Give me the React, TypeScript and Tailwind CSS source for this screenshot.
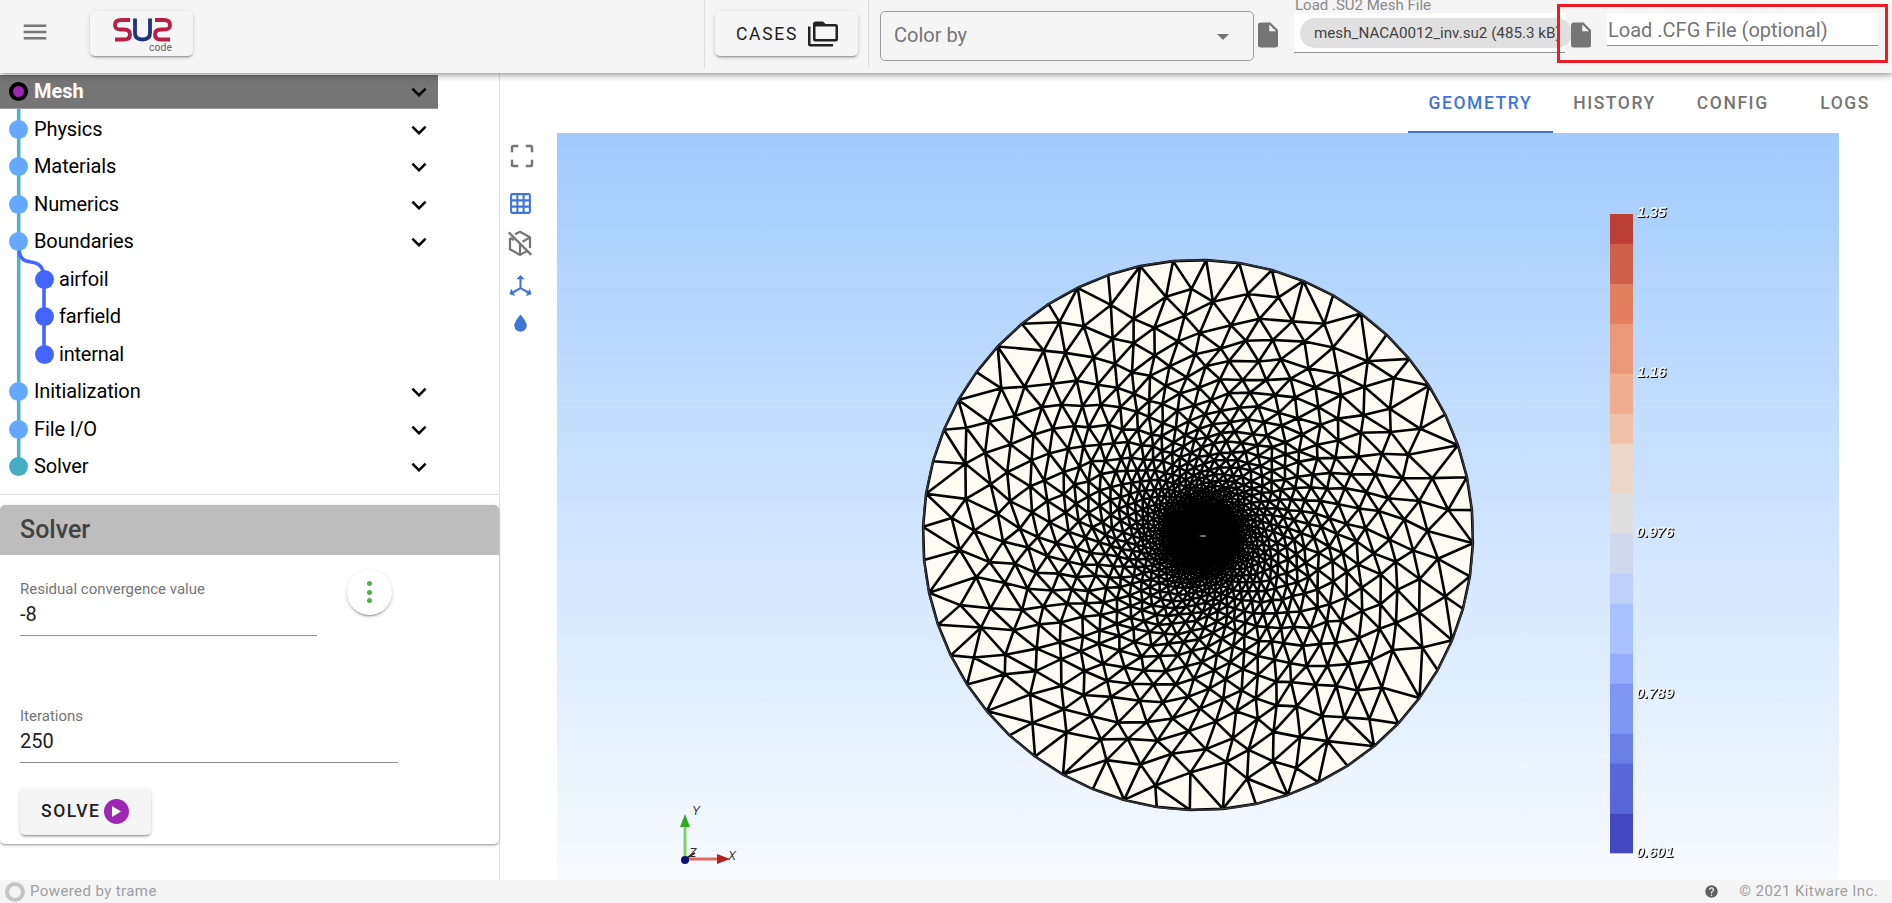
import { useMemo } from "react";

const P = {
  menu: "M3,6H21V8H3V6M3,11H21V13H3V11M3,16H21V18H3V16Z",
  file: "M13,9V3.5L18.5,9M6,2C4.89,2 4,2.89 4,4V20A2,2 0 0,0 6,22H18A2,2 0 0,0 20,20V8L14,2H6Z",
  chevron: "M7.41,8.58L12,13.17L16.59,8.58L18,10L12,16L6,10L7.41,8.58Z",
  folders: "M22,4H14L12,2H6A2,2 0 0,0 4,4V16A2,2 0 0,0 6,18H22A2,2 0 0,0 24,16V6A2,2 0 0,0 22,4M22,16H6V6H22V16M2,6H0V20A2,2 0 0,0 2,22H20V20H2V6Z",
  crop: "M5,3C3.89,3 3,3.89 3,5V9H5V5H9V3H5M19,3H15V5H19V9H21V5C21,3.89 20.1,3 19,3M5,15H3V19A2,2 0 0,0 5,21H9V19H5V15M19,15V19H15V21H19A2,2 0 0,0 21,19V15H19Z",
  grid: "M10,4V8H14V4H10M16,4V8H20V4H16M16,10V14H20V10H16M16,16V20H20V16H16M14,20V16H10V20H14M8,20V16H4V20H8M8,14V10H4V14H8M8,8V4H4V8H8M10,14H14V10H10V14M4,2H20A2,2 0 0,1 22,4V20A2,2 0 0,1 20,22H4C2.92,22 2,21.1 2,20V4A2,2 0 0,1 4,2Z",
  axis: "M12,2L16,6H13V13.85L19.53,17.61L21,15.03L22.5,20.5L17.03,21.96L18.53,19.35L12,15.58L5.47,19.35L6.97,21.96L1.5,20.5L3,15.03L4.47,17.61L11,13.85V6H8L12,2Z",
  water: "M12,20A6,6 0 0,1 6,14C6,10 12,3.25 12,3.25C12,3.25 18,10 18,14A6,6 0 0,1 12,20Z",
  help: "M15.07,11.25L14.17,12.17C13.45,12.89 13,13.5 13,15H11V14.5C11,13.39 11.45,12.39 12.17,11.67L13.41,10.41C13.78,10.05 14,9.55 14,9C14,7.89 13.1,7 12,7A2,2 0 0,0 10,9H8A4,4 0 0,1 12,5A4,4 0 0,1 16,9C16,9.88 15.64,10.67 15.07,11.25M13,19H11V17H13M12,2A10,10 0 0,0 2,12A10,10 0 0,0 12,22A10,10 0 0,0 22,12C22,6.47 17.5,2 12,2Z",
};

function Icon({ d, className }: { d: string; className: string }) {
  return (
    <svg viewBox="0 0 24 24" className={className} fill="currentColor">
      <path d={d} fillRule="evenodd" />
    </svg>
  );
}

function buildMesh(): string {
  const cx = 1198, cy = 535, R = 275, fx = 1203, fy = 536;
  let seed = 12345;
  const rnd = () => {
    seed = (seed * 16807) % 2147483647;
    return seed / 2147483647 - 0.5;
  };
  const pts: [number, number][] = [];
  const N = 1500, rMin = 9, rMax = 256;
  const c = Math.log(rMax / rMin) / N;
  for (let k = 0; k < N; k++) {
    const r = rMin * Math.exp(c * k);
    const t = k * 2.399963;
    const j = r * 0.03;
    const mix = r / R;
    const ox = fx + (cx - fx) * mix, oy = fy + (cy - fy) * mix;
    pts.push([ox + r * Math.cos(t) + rnd() * j, oy + r * Math.sin(t) + rnd() * j]);
  }
  const B = 52;
  for (let i = 0; i < B; i++) {
    const t = (i / B) * Math.PI * 2 + 0.03;
    pts.push([cx + R * Math.cos(t), cy + R * Math.sin(t)]);
  }
  const n = pts.length;
  pts.push([cx - 20000, cy - 20000], [cx + 20000, cy - 20000], [cx, cy + 20000]);
  type T = { a: number; b: number; c: number; x: number; y: number; r: number };
  const make = (a: number, b: number, c2: number): T => {
    const [ax, ay] = pts[a], [bx, by] = pts[b], [ex, ey] = pts[c2];
    const d = 2 * (ax * (by - ey) + bx * (ey - ay) + ex * (ay - by));
    const A = ax * ax + ay * ay, E = bx * bx + by * by, F = ex * ex + ey * ey;
    const x = (A * (by - ey) + E * (ey - ay) + F * (ay - by)) / d;
    const y = (A * (ex - bx) + E * (ax - ex) + F * (bx - ax)) / d;
    return { a, b, c: c2, x, y, r: (x - ax) ** 2 + (y - ay) ** 2 };
  };
  let tris: T[] = [make(n, n + 1, n + 2)];
  for (let i = 0; i < n; i++) {
    const [px, py] = pts[i];
    const keep: T[] = [];
    const edges = new Map<string, [number, number, number]>();
    const add = (u: number, v: number) => {
      const key = u < v ? u + "," + v : v + "," + u;
      const e = edges.get(key);
      if (e) e[2]++;
      else edges.set(key, [u, v, 1]);
    };
    for (const t of tris) {
      if ((px - t.x) ** 2 + (py - t.y) ** 2 < t.r) {
        add(t.a, t.b);
        add(t.b, t.c);
        add(t.c, t.a);
      } else keep.push(t);
    }
    edges.forEach((e) => {
      if (e[2] === 1) keep.push(make(e[0], e[1], i));
    });
    tris = keep;
  }
  const seen = new Set<string>();
  let path = "";
  const line = (u: number, v: number) => {
    if (u >= n || v >= n) return;
    const key = u < v ? u + "," + v : v + "," + u;
    if (seen.has(key)) return;
    seen.add(key);
    path += `M${pts[u][0].toFixed(1)} ${pts[u][1].toFixed(1)}L${pts[v][0].toFixed(1)} ${pts[v][1].toFixed(1)}`;
  };
  for (const t of tris) {
    line(t.a, t.b);
    line(t.b, t.c);
    line(t.c, t.a);
  }
  return path;
}

const bands: [number, string][] = [
  [67, "#bb4033"], [90, "#cf6048"], [89, "#e17f5e"], [112, "#ea9877"], [90, "#f0ae8e"], [67, "#f0c2a9"],
  [112, "#ecd6c8"], [89, "#dfdfdf"], [90, "#cfd8ec"], [67, "#bfd0f8"], [112, "#a9c1fd"], [68, "#94aefd"],
  [111, "#7f97f4"], [68, "#6a80e6"], [111, "#5868d8"], [89, "#4348c0"],
];

function Viewer() {
  const mesh = useMemo(buildMesh, []);
  let y = 214;
  const rects = bands.map(([h, col]) => {
    const hh = (h * 639) / 1432;
    const el = <rect key={col} x={1610} y={y} width={23} height={hh + 0.3} fill={col} />;
    y += hh;
    return el;
  });
  return (
    <div className="relative w-[1282px] h-[747px] bg-gradient-to-b from-[#a2cbfd] to-[#f8fbff]">
      <svg viewBox="557 133 1282 747" className="absolute inset-0 w-full h-full">
        <circle cx={1198} cy={535} r={275} fill="#fdfbf2" />
        <circle cx={1203} cy={536} r={32} fill="#000" />
        <path d={mesh} stroke="#000" strokeWidth={2.6} fill="none" />
        <ellipse cx={1203} cy={536} rx={3.5} ry={1} fill="#777" />
        <circle cx={1198} cy={535} r={275} fill="none" stroke="#33363c" strokeWidth={1.6} />
        {rects}
        <g fill="#f4f4f4" fontFamily="'Liberation Sans', sans-serif" fontStyle="italic" fontWeight={700} fontSize={15} className="[filter:drop-shadow(1px_1px_0.5px_#111)]">
          <text x={1637} y={217}>1.35</text>
          <text x={1637} y={377}>1.16</text>
          <text x={1636} y={537}>0.976</text>
          <text x={1636} y={698}>0.789</text>
          <text x={1636} y={857}>0.601</text>
        </g>
        <line x1={685} y1={859} x2={685} y2={826} stroke="#7ed36e" strokeWidth={3} />
        <path d="M685 814l5 13h-10z" fill="#35a81e" />
        <line x1={685} y1={859} x2={722} y2={859} stroke="#e26a62" strokeWidth={3} />
        <path d="M730 859l-13 5v-10z" fill="#b5201c" />
        <line x1={685} y1={859} x2={695} y2={853} stroke="#222" strokeWidth={1.5} />
        <circle cx={685} cy={860} r={4} fill="#10106e" />
        <g fill="#333" fontFamily="'Liberation Sans', sans-serif" fontStyle="italic" fontSize={12}>
          <text x={692} y={815}>Y</text>
          <text x={728} y={860}>X</text>
          <text x={689} y={857}>Z</text>
        </g>
      </svg>
    </div>
  );
}

function Dot({ color }: { color: string }) {
  return <span className={`w-[19px] h-[19px] rounded-full shrink-0 ${color}`} />;
}

function TreeRow({ label, color, chevron = true }: { label: string; color: string; chevron?: boolean }) {
  return (
    <div className="relative h-[37.5px] flex items-center pl-[9px] text-[20px] tracking-[-0.1px] text-black">
      <Dot color={color} />
      <span className="ml-[6px] leading-none -mt-[1px]">{label}</span>
      {chevron && <Icon d={P.chevron} className="absolute left-[404px] top-[4px] w-[30px] h-[30px] text-black" />}
    </div>
  );
}

function SubRow({ label }: { label: string }) {
  return (
    <div className="relative h-[37.5px] flex items-center pl-[34.5px] text-[20px] tracking-[-0.2px] text-black">
      <Dot color="bg-[#4464ff]" />
      <span className="ml-[5.5px] leading-none -mt-[1px]">{label}</span>
    </div>
  );
}

function Tree() {
  return (
    <div className="relative">
      <svg className="absolute left-0 top-0 w-[60px] h-[412px]" viewBox="0 0 60 412" fill="none">
        <path d="M18.7 27V393" stroke="#4fb2c9" strokeWidth={3.6} />
        <path d="M19 177c1 10 6 11 12 12c8 1 13 5 13 16V281" stroke="#4464ff" strokeWidth={3.6} />
      </svg>
      <div className="relative h-[37.5px] flex items-center pl-[9px]">
        <div className="absolute left-0 top-[2px] w-[438px] h-[34px] bg-[#757575] border-b border-[#9a9a9a]" />
        <span className="relative w-[19px] h-[19px] rounded-full bg-[#9c27b0] border-[4px] border-black shrink-0" />
        <span className="relative ml-[6px] text-[20px] font-bold text-white leading-none -mt-[1px]">Mesh</span>
        <Icon d={P.chevron} className="absolute left-[404px] top-[4px] w-[30px] h-[30px] text-black" />
      </div>
      <TreeRow label="Physics" color="bg-[#64a9ff]" />
      <TreeRow label="Materials" color="bg-[#64a9ff]" />
      <TreeRow label="Numerics" color="bg-[#64a9ff]" />
      <TreeRow label="Boundaries" color="bg-[#64a9ff]" />
      <SubRow label="airfoil" />
      <SubRow label="farfield" />
      <SubRow label="internal" />
      <TreeRow label="Initialization" color="bg-[#64a9ff]" />
      <TreeRow label="File I/O" color="bg-[#64a9ff]" />
      <TreeRow label="Solver" color="bg-[#45adc4]" />
    </div>
  );
}

function Field({ label, value, width, gap }: { label: string; value: string; width: string; gap: string }) {
  return (
    <div className={`${width} ${gap} border-b border-[#8f8f8f]`}>
      <div className="text-[15px] leading-[18px] text-[#757575]">{label}</div>
      <div className="mt-[1px] text-[20px] leading-[30px] text-[#212121] pb-[6px]">{value}</div>
    </div>
  );
}

function SolverPanel() {
  return (
    <div className="relative mt-[10px] h-[339px] bg-white rounded-[5px] shadow-[0_2px_2px_-1px_rgba(0,0,0,0.3),0_1px_4px_rgba(0,0,0,0.18)]">
      <div className="h-[50px] bg-[#bdbdbd] rounded-t-[5px] flex items-center pl-[20px] text-[25px] font-medium text-[#424242] leading-none">Solver</div>
      <div className="px-[20px] pt-[25px]">
        <Field label="Residual convergence value" value="-8" width="w-[297px]" gap="mb-[71px]" />
        <Field label="Iterations" value="250" width="w-[378px]" gap="mb-[26px]" />
        <button className="w-[131px] h-[46px] bg-[#f5f5f5] rounded-[5px] shadow-[0_3px_1px_-2px_rgba(0,0,0,0.2),0_2px_2px_rgba(0,0,0,0.14),0_1px_5px_rgba(0,0,0,0.12)] flex items-center pl-[21px] text-[17.5px] font-medium tracking-[1.56px] text-[#212121]">
          SOLVE
          <span className="ml-[3px] w-[25px] h-[25px] rounded-full bg-[#9c27b0] flex items-center justify-center">
            <svg viewBox="0 0 10 12" className="w-[9px] h-[11px] ml-[1px]"><path d="M0 0l10 6-10 6z" fill="#fff" /></svg>
          </span>
        </button>
      </div>
      <div className="absolute left-[347px] top-[65px] w-[45px] h-[45px] rounded-full bg-white shadow-[0_3px_1px_-2px_rgba(0,0,0,0.2),0_2px_2px_rgba(0,0,0,0.14),0_1px_5px_rgba(0,0,0,0.12)] flex flex-col items-center justify-center gap-[3.5px]">
        <span className="w-[5px] h-[5px] rounded-full bg-[#4caf50]" />
        <span className="w-[5px] h-[5px] rounded-full bg-[#4caf50]" />
        <span className="w-[5px] h-[5px] rounded-full bg-[#4caf50]" />
      </div>
    </div>
  );
}

function Logo() {
  return (
    <div className="relative ml-[44px] mt-[11px] w-[103px] h-[45px] bg-[#f5f5f5] rounded-[5px] shadow-[0_3px_1px_-2px_rgba(0,0,0,0.2),0_2px_2px_rgba(0,0,0,0.14),0_1px_5px_rgba(0,0,0,0.12)]">
      <svg viewBox="0 0 103 45" className="absolute inset-0 w-full h-full" fill="none" strokeWidth={3.8}>
        <path d="M40 9H31c-4 0-6 1.500-6 5s2 4.500 6 4.500h3c4 0 6 2 6 5s-2 5-6 5H25" stroke="#b81f45" />
        <path d="M45 7.500V22c0 4.500 2.500 6.500 7.500 6.500s7.500-2 7.500-6.500V7.500" stroke="#1f3480" />
        <path d="M65 9h9c4 0 6 1.500 6 5s-2 4.500-6 4.500h-3c-4 0-6 2-6 5s2 5 6 5h9" stroke="#b81f45" />
      </svg>
      <span className="absolute left-[59px] top-[31px] text-[10.5px] leading-[12px] text-[#666]">code</span>
    </div>
  );
}

function Header() {
  return (
    <header className="relative z-10 h-[73px] shrink-0 flex items-start bg-[#f5f5f5] shadow-[0_2px_4px_-1px_rgba(0,0,0,0.2),0_4px_5px_rgba(0,0,0,0.14),0_1px_10px_rgba(0,0,0,0.12)]">
      <Icon d={P.menu} className="ml-[20px] mt-[17px] w-[30px] h-[30px] text-[#757575]" />
      <div className="-ml-[4px]"><Logo /></div>
      <div className="ml-[511px] w-px h-[68px] bg-[#dcdcdc]" />
      <button className="ml-[10px] mt-[11px] w-[143px] h-[45px] bg-[#f5f5f5] rounded-[5px] shadow-[0_3px_1px_-2px_rgba(0,0,0,0.2),0_2px_2px_rgba(0,0,0,0.14),0_1px_5px_rgba(0,0,0,0.12)] flex items-center pl-[21px] text-[17.5px] tracking-[1.7px] text-[#212121]">
        <span className="mt-[1px]">CASES</span>
        <Icon d={P.folders} className="ml-[10px] w-[30px] h-[30px]" />
      </button>
      <div className="ml-[10px] w-px h-[68px] bg-[#dcdcdc]" />
      <div className="relative ml-[11px] mt-[11px] w-[374px] h-[50px] border border-[#9e9e9e] rounded-[5px] flex items-center pl-[13px] pb-[2px] text-[20px] text-[#757575]">
        Color by
        <svg viewBox="0 0 12 6" className="absolute right-[24px] top-[22px] w-[12px] h-[6px]"><path d="M0 0h12l-6 6z" fill="#757575" /></svg>
      </div>
      <Icon d={P.file} className="ml-[-1px] mt-[20px] w-[30px] h-[30px] text-[#757575]" />
      <div className="relative ml-[11px] w-[271px] h-[53px]">
        <div className="ml-[1px] text-[15px] leading-[13px] -mt-[1px] h-[14px] text-[#8a8a8a] whitespace-nowrap">Load .SU2 Mesh File</div>
        <div className="h-[40px] bg-white border-b border-[#8f8f8f] pt-[5px] pl-[6px]">
          <div className="w-[272px] h-[30px] rounded-full bg-[#e0e0e0] flex items-center pl-[14px] text-[15.2px] text-[#424242] whitespace-nowrap">mesh_NACA0012_inv.su2 (485.3 kB)</div>
        </div>
      </div>
      <Icon d={P.file} className="relative ml-[1px] mt-[20px] w-[30px] h-[30px] text-[#757575]" />
      <div className="relative ml-[11px] mt-[13px] pl-[1px] pt-[2px] w-[271px] h-[33px] bg-white border-b border-[#8f8f8f] text-[20px] leading-[30px] text-[#757575] whitespace-nowrap">Load .CFG File (optional)</div>
      <div className="absolute left-[1557px] top-[4px] w-[331px] h-[59px] border-[3px] border-[#ed1c24]" />
    </header>
  );
}

function Tabs() {
  const cls = "shrink-0 min-w-[112px] px-[20.5px] pt-[2px] h-[60px] border-b-2 flex items-center justify-center text-[17.5px] font-medium tracking-[1.56px] whitespace-nowrap";
  return (
    <div className="h-[60px] shrink-0 flex pl-[908px] overflow-hidden">
      <div className={`${cls} text-[#3f74d8] border-[#3f74d8]`}>GEOMETRY</div>
      <div className={`${cls} text-[#757575] border-transparent`}>HISTORY</div>
      <div className={`${cls} text-[#757575] border-transparent`}>CONFIG</div>
      <div className={`${cls} text-[#757575] border-transparent`}>LOGS</div>
    </div>
  );
}

function Tools() {
  return (
    <div className="w-[57px] shrink-0 flex flex-col items-start pl-[7px] pt-[8px]">
      <Icon d={P.crop} className="w-[30px] h-[30px] text-[#757575]" />
      <Icon d={P.grid} className="mt-[19.5px] ml-[0.5px] w-[25px] h-[25px] text-[#3f74d8]" />
      <svg viewBox="0 0 24 24" className="mt-[12.5px] -ml-[2px] w-[30px] h-[30px] text-[#757575]" fill="none" stroke="currentColor" strokeWidth={1.8}>
        <path d="M8 5l4-2 8 4.500V16M17.500 18.500L12 21.500 4 17V8" />
        <path d="M12 21.500V13M20 7.500L14 11M4 8l3 1.500" />
        <path d="M3 3.500L21 21.500" />
      </svg>
      <Icon d={P.axis} className="mt-[14.5px] ml-[0.5px] w-[25px] h-[25px] text-[#3f74d8]" />
      <Icon d={P.water} className="mt-[13px] ml-[0.5px] w-[25px] h-[25px] text-[#3f74d8]" />
    </div>
  );
}

function Footer() {
  return (
    <footer className="h-[23px] shrink-0 bg-[#f5f5f5] flex items-center text-[15px] tracking-[0.4px] text-[#9e9e9e] whitespace-nowrap">
      <span className="ml-[5px] w-[20px] h-[20px] rounded-full border-[4px] border-[#c4c4c4]" />
      <span className="ml-[5px]">Powered by trame</span>
      <Icon d={P.help} className="ml-auto w-[15px] h-[15px] text-[#616161]" />
      <span className="ml-[20px] mr-[14px]">© 2021 Kitware Inc.</span>
    </footer>
  );
}

export default function App() {
  return (
    <div className="w-[1892px] h-[903px] flex flex-col overflow-hidden bg-white" style={{ fontFamily: "Roboto, sans-serif" }}>
      <Header />
      <div className="flex-1 flex min-h-0">
        <aside className="w-[500px] shrink-0 border-r border-[#e0e0e0] flex flex-col">
          <Tree />
          <div className="mt-[8px] h-px bg-[#e0e0e0]" />
          <SolverPanel />
        </aside>
        <main className="flex-1 flex flex-col min-w-0">
          <Tabs />
          <div className="flex">
            <Tools />
            <Viewer />
          </div>
        </main>
      </div>
      <Footer />
    </div>
  );
}
